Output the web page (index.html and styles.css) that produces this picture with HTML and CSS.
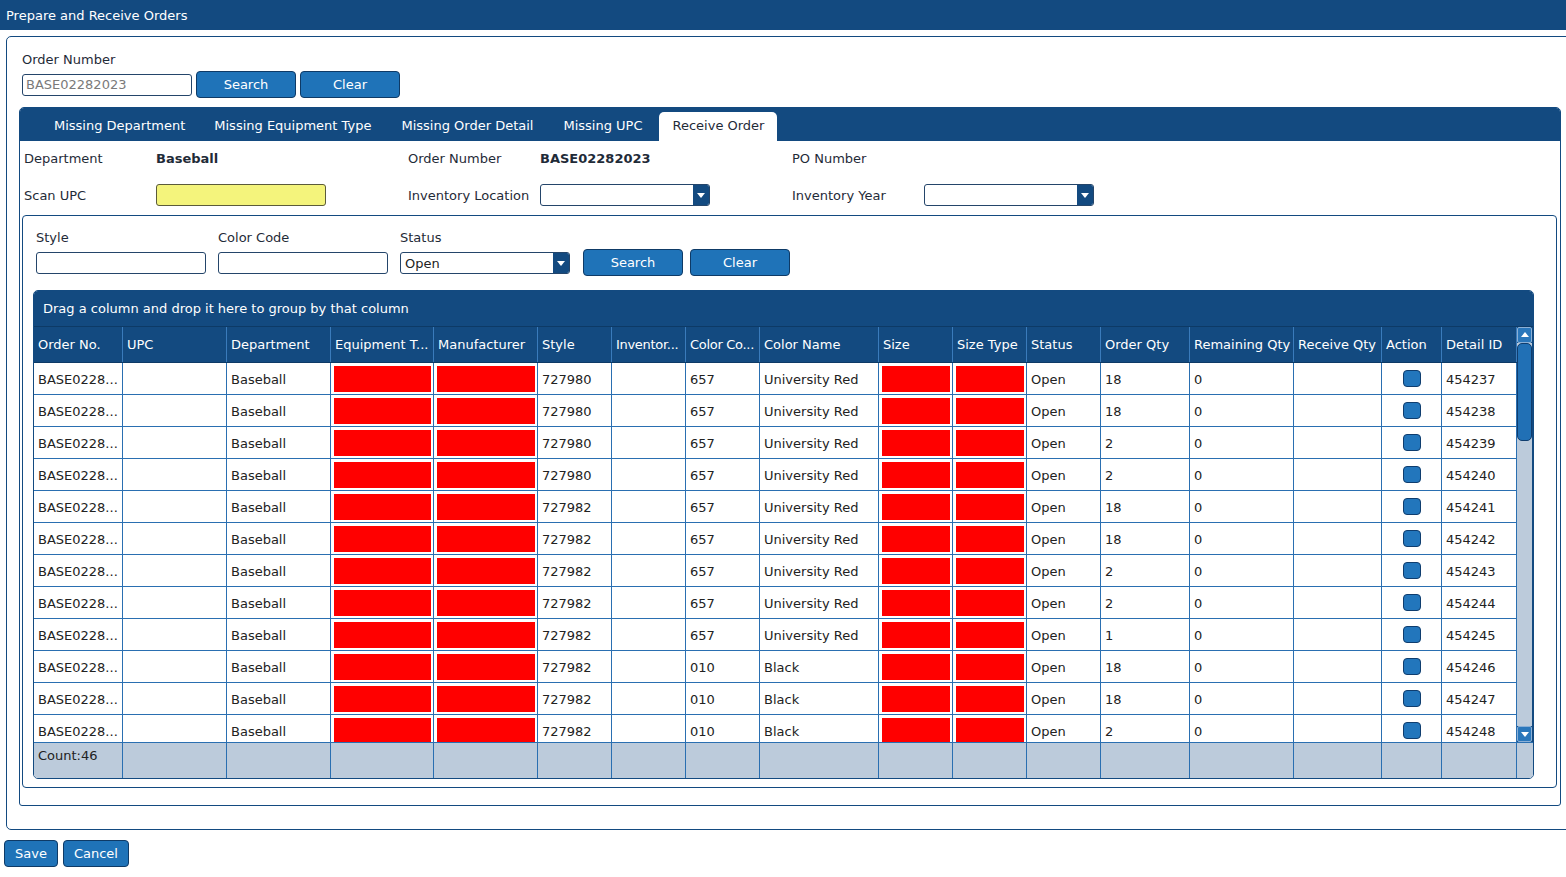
FILE: index.html
```html
<!DOCTYPE html>
<html lang="en">
<head>
<meta charset="utf-8">
<title>Prepare and Receive Orders</title>
<link rel="stylesheet" href="styles.css">
</head>
<body>
<div class="titlebar">Prepare and Receive Orders</div>

<div class="outer">
  <div class="order-form">
    <div class="lbl">Order Number</div>
    <div class="order-row">
      <input class="txt order-input" type="text" value="BASE02282023">
      <button class="btn">Search</button>
      <button class="btn">Clear</button>
    </div>
  </div>

  <div class="tabpanel">
    <div class="tabstrip">
      <div class="tab">Missing Department</div>
      <div class="tab">Missing Equipment Type</div>
      <div class="tab">Missing Order Detail</div>
      <div class="tab">Missing UPC</div>
      <div class="tab active">Receive Order</div>
    </div>

    <div class="info">
      <div class="ilbl">Department</div>
      <div class="ival">Baseball</div>
      <div class="ilbl">Order Number</div>
      <div class="ival">BASE02282023</div>
      <div class="ilbl">PO Number</div>
      <div class="ival"></div>

      <div class="ilbl">Scan UPC</div>
      <div><input class="txt upc" type="text"></div>
      <div class="ilbl">Inventory Location</div>
      <div><div class="select"><span class="sel-text"></span><span class="sel-arrow"></span></div></div>
      <div class="ilbl">Inventory Year</div>
      <div><div class="select"><span class="sel-text"></span><span class="sel-arrow"></span></div></div>
    </div>

    <div class="inner">
      <div class="filters">
        <div class="field">
          <div class="lbl">Style</div>
          <input class="txt f-input" type="text">
        </div>
        <div class="field">
          <div class="lbl">Color Code</div>
          <input class="txt f-input" type="text">
        </div>
        <div class="field">
          <div class="lbl">Status</div>
          <div class="select"><span class="sel-text">Open</span><span class="sel-arrow"></span></div>
        </div>
        <button class="btn f-search">Search</button>
        <button class="btn f-clear">Clear</button>
      </div>

      <div class="grid">
        <div class="group-header">Drag a column and drop it here to group by that column</div>
        <div class="grid-main">
          <div class="grid-cols">
            <div class="row head">
              <div class="c">Order No.</div>
              <div class="c">UPC</div>
              <div class="c">Department</div>
              <div class="c">Equipment T...</div>
              <div class="c">Manufacturer</div>
              <div class="c">Style</div>
              <div class="c">Inventor...</div>
              <div class="c">Color Co...</div>
              <div class="c">Color Name</div>
              <div class="c">Size</div>
              <div class="c">Size Type</div>
              <div class="c">Status</div>
              <div class="c">Order Qty</div>
              <div class="c">Remaining Qty</div>
              <div class="c">Receive Qty</div>
              <div class="c">Action</div>
              <div class="c">Detail ID</div>
            </div>
            <div class="body">
              <div class="row"><div class="c">BASE0228...</div><div class="c"></div><div class="c">Baseball</div><div class="c red"><i></i></div><div class="c red"><i></i></div><div class="c">727980</div><div class="c"></div><div class="c">657</div><div class="c">University Red</div><div class="c red"><i></i></div><div class="c red"><i></i></div><div class="c">Open</div><div class="c">18</div><div class="c">0</div><div class="c"></div><div class="c act"><span class="abtn"></span></div><div class="c">454237</div></div>
              <div class="row"><div class="c">BASE0228...</div><div class="c"></div><div class="c">Baseball</div><div class="c red"><i></i></div><div class="c red"><i></i></div><div class="c">727980</div><div class="c"></div><div class="c">657</div><div class="c">University Red</div><div class="c red"><i></i></div><div class="c red"><i></i></div><div class="c">Open</div><div class="c">18</div><div class="c">0</div><div class="c"></div><div class="c act"><span class="abtn"></span></div><div class="c">454238</div></div>
              <div class="row"><div class="c">BASE0228...</div><div class="c"></div><div class="c">Baseball</div><div class="c red"><i></i></div><div class="c red"><i></i></div><div class="c">727980</div><div class="c"></div><div class="c">657</div><div class="c">University Red</div><div class="c red"><i></i></div><div class="c red"><i></i></div><div class="c">Open</div><div class="c">2</div><div class="c">0</div><div class="c"></div><div class="c act"><span class="abtn"></span></div><div class="c">454239</div></div>
              <div class="row"><div class="c">BASE0228...</div><div class="c"></div><div class="c">Baseball</div><div class="c red"><i></i></div><div class="c red"><i></i></div><div class="c">727980</div><div class="c"></div><div class="c">657</div><div class="c">University Red</div><div class="c red"><i></i></div><div class="c red"><i></i></div><div class="c">Open</div><div class="c">2</div><div class="c">0</div><div class="c"></div><div class="c act"><span class="abtn"></span></div><div class="c">454240</div></div>
              <div class="row"><div class="c">BASE0228...</div><div class="c"></div><div class="c">Baseball</div><div class="c red"><i></i></div><div class="c red"><i></i></div><div class="c">727982</div><div class="c"></div><div class="c">657</div><div class="c">University Red</div><div class="c red"><i></i></div><div class="c red"><i></i></div><div class="c">Open</div><div class="c">18</div><div class="c">0</div><div class="c"></div><div class="c act"><span class="abtn"></span></div><div class="c">454241</div></div>
              <div class="row"><div class="c">BASE0228...</div><div class="c"></div><div class="c">Baseball</div><div class="c red"><i></i></div><div class="c red"><i></i></div><div class="c">727982</div><div class="c"></div><div class="c">657</div><div class="c">University Red</div><div class="c red"><i></i></div><div class="c red"><i></i></div><div class="c">Open</div><div class="c">18</div><div class="c">0</div><div class="c"></div><div class="c act"><span class="abtn"></span></div><div class="c">454242</div></div>
              <div class="row"><div class="c">BASE0228...</div><div class="c"></div><div class="c">Baseball</div><div class="c red"><i></i></div><div class="c red"><i></i></div><div class="c">727982</div><div class="c"></div><div class="c">657</div><div class="c">University Red</div><div class="c red"><i></i></div><div class="c red"><i></i></div><div class="c">Open</div><div class="c">2</div><div class="c">0</div><div class="c"></div><div class="c act"><span class="abtn"></span></div><div class="c">454243</div></div>
              <div class="row"><div class="c">BASE0228...</div><div class="c"></div><div class="c">Baseball</div><div class="c red"><i></i></div><div class="c red"><i></i></div><div class="c">727982</div><div class="c"></div><div class="c">657</div><div class="c">University Red</div><div class="c red"><i></i></div><div class="c red"><i></i></div><div class="c">Open</div><div class="c">2</div><div class="c">0</div><div class="c"></div><div class="c act"><span class="abtn"></span></div><div class="c">454244</div></div>
              <div class="row"><div class="c">BASE0228...</div><div class="c"></div><div class="c">Baseball</div><div class="c red"><i></i></div><div class="c red"><i></i></div><div class="c">727982</div><div class="c"></div><div class="c">657</div><div class="c">University Red</div><div class="c red"><i></i></div><div class="c red"><i></i></div><div class="c">Open</div><div class="c">1</div><div class="c">0</div><div class="c"></div><div class="c act"><span class="abtn"></span></div><div class="c">454245</div></div>
              <div class="row"><div class="c">BASE0228...</div><div class="c"></div><div class="c">Baseball</div><div class="c red"><i></i></div><div class="c red"><i></i></div><div class="c">727982</div><div class="c"></div><div class="c">010</div><div class="c">Black</div><div class="c red"><i></i></div><div class="c red"><i></i></div><div class="c">Open</div><div class="c">18</div><div class="c">0</div><div class="c"></div><div class="c act"><span class="abtn"></span></div><div class="c">454246</div></div>
              <div class="row"><div class="c">BASE0228...</div><div class="c"></div><div class="c">Baseball</div><div class="c red"><i></i></div><div class="c red"><i></i></div><div class="c">727982</div><div class="c"></div><div class="c">010</div><div class="c">Black</div><div class="c red"><i></i></div><div class="c red"><i></i></div><div class="c">Open</div><div class="c">18</div><div class="c">0</div><div class="c"></div><div class="c act"><span class="abtn"></span></div><div class="c">454247</div></div>
              <div class="row"><div class="c">BASE0228...</div><div class="c"></div><div class="c">Baseball</div><div class="c red"><i></i></div><div class="c red"><i></i></div><div class="c">727982</div><div class="c"></div><div class="c">010</div><div class="c">Black</div><div class="c red"><i></i></div><div class="c red"><i></i></div><div class="c">Open</div><div class="c">2</div><div class="c">0</div><div class="c"></div><div class="c act"><span class="abtn"></span></div><div class="c">454248</div></div>
            </div>
          </div>
          <div class="vscroll">
            <div class="sbtn up"></div>
            <div class="track"><div class="thumb"></div></div>
            <div class="sbtn down"></div>
          </div>
        </div>
        <div class="row foot">
          <div class="c">Count:46</div>
          <div class="c"></div><div class="c"></div><div class="c"></div><div class="c"></div><div class="c"></div><div class="c"></div><div class="c"></div><div class="c"></div><div class="c"></div><div class="c"></div><div class="c"></div><div class="c"></div><div class="c"></div><div class="c"></div><div class="c"></div><div class="c"></div><div class="c"></div>
        </div>
      </div>
    </div>
  </div>
</div>

<div class="actions">
  <button class="btn small">Save</button>
  <button class="btn small">Cancel</button>
</div>
</body>
</html>
```

FILE: styles.css
```css
html, body {
  margin: 0;
  padding: 0;
  overflow: hidden;
}
body {
  font-family: "DejaVu Sans", Verdana, sans-serif;
  font-size: 13px;
  color: #222;
  background: #fff;
  width: 1566px;
}
input, button {
  font-family: "DejaVu Sans", Verdana, sans-serif;
  font-size: 13px;
}

.titlebar {
  height: 30px;
  line-height: 31px;
  background: #134a80;
  color: #fff;
  padding-left: 6px;
}

.outer {
  margin: 6px 0 0 6px;
  width: 1600px;
  border: 1px solid #134a80;
  border-radius: 5px 0 0 5px;
  padding: 15px 0 23px 12px;
  box-sizing: border-box;
}

.lbl {
  line-height: 16px;
  color: #1f2b38;
}

.order-form {
  margin-left: 3px;
}
.order-row {
  display: flex;
  align-items: center;
  gap: 4px;
  margin-top: 3px;
  height: 27px;
}

.txt {
  box-sizing: border-box;
  height: 22px;
  border: 1px solid #24456a;
  border-radius: 3px;
  padding: 0 3px;
  background: #fff;
  outline: none;
}
.order-input {
  width: 170px;
  color: #7a7a7a;
}

.btn {
  box-sizing: border-box;
  height: 27px;
  width: 100px;
  background: #1f73b8;
  color: #fff;
  border: 1px solid #0e3a66;
  border-radius: 4px;
  padding: 0;
  cursor: pointer;
}

.tabpanel {
  margin-top: 9px;
  width: 1542px;
  box-sizing: border-box;
  border: 1px solid #134a80;
  border-radius: 5px 5px 3px 3px;
  padding-bottom: 17px;
}

.tabstrip {
  height: 33px;
  background: #134a80;
  display: flex;
  align-items: flex-end;
  padding-left: 19px;
  border-radius: 4px 4px 0 0;
}
.tab {
  height: 29px;
  line-height: 27px;
  padding: 0 15px;
  color: #fff;
  box-sizing: border-box;
}
.tab:first-child {
  padding-right: 14px;
}
.tab.active {
  background: #fff;
  color: #1f2b38;
  border-radius: 5px 5px 0 0;
  padding: 0 13px;
  margin-left: 2px;
}

.info {
  display: grid;
  grid-template-columns: 132px 252px 132px 252px 132px 252px;
  grid-template-rows: 34px 40px;
  align-items: center;
  padding-left: 4px;
}
.ilbl {
  color: #1f2b38;
}
.ival {
  font-weight: bold;
  color: #1f2b38;
}
.upc {
  width: 170px;
  background: #f4f47c;
  border-color: #5b5b3a;
  display: block;
}

.select {
  box-sizing: border-box;
  width: 170px;
  height: 22px;
  border: 1px solid #24456a;
  border-radius: 3px;
  display: flex;
  background: #fff;
  overflow: hidden;
}
.sel-text {
  flex: 1;
  line-height: 21px;
  padding-left: 4px;
}
.sel-arrow {
  width: 16px;
  background: #134a80;
  position: relative;
}
.sel-arrow::after {
  content: "";
  position: absolute;
  left: 4px;
  top: 8px;
  border-left: 4px solid transparent;
  border-right: 4px solid transparent;
  border-top: 5px solid #fff;
}

.inner {
  margin: 0 3px 0 2px;
  border: 1px solid #134a80;
  border-radius: 4px;
  padding: 14px 0 8px 10px;
}

.filters {
  display: flex;
  align-items: flex-end;
  margin-left: 3px;
  padding-bottom: 2px;
}
.field {
  width: 170px;
  margin-right: 12px;
  display: flex;
  flex-direction: column;
}
.field .lbl {
  margin-bottom: 6px;
}
.f-input {
  width: 170px;
}
.f-search {
  margin-left: 1px;
  margin-bottom: -2px;
}
.f-clear {
  margin-left: 7px;
  margin-bottom: -2px;
}

.grid {
  margin-top: 14px;
  width: 1501px;
  box-sizing: border-box;
  border: 1px solid #134a80;
  border-radius: 5px;
  overflow: hidden;
}
.group-header {
  height: 35px;
  line-height: 36px;
  background: #134a80;
  color: #fff;
  padding-left: 9px;
  border-bottom: 1px solid #0d3a66;
}
.grid-main {
  display: flex;
}
.grid-cols {
  width: 1483px;
}
.row {
  display: grid;
  grid-template-columns: 89px 104px 104px 103px 104px 74px 74px 74px 119px 74px 74px 74px 89px 104px 88px 60px 75px;
}
.c {
  box-sizing: border-box;
  border-right: 1px solid #2a6fb1;
  padding: 0 0 0 4px;
  white-space: nowrap;
  overflow: hidden;
}
.head {
  background: #134a80;
  color: #fff;
  height: 36px;
  border-bottom: 1px solid #0d3a66;
  box-sizing: border-box;
}
.head .c {
  line-height: 36px;
  border-right-color: #3a7bbb;
  padding-left: 4px;
}
.head .c:nth-child(7),
.head .c:nth-child(8) {
  letter-spacing: -0.3px;
}
.body {
  height: 379px;
  overflow: hidden;
}
.body .row {
  height: 32px;
}
.body .c {
  border-bottom: 1px solid #2a6fb1;
  line-height: 33px;
  color: #222;
}
.body .c.red {
  padding: 3px 2px 2px 3px;
}
.red i {
  display: block;
  height: 26px;
  background: #ff0000;
}
.body .c.act {
  display: flex;
  align-items: center;
  justify-content: center;
  padding: 0;
}
.abtn {
  display: block;
  width: 18px;
  height: 17px;
  box-sizing: border-box;
  background: #2276bc;
  border: 1px solid #0f3d6e;
  border-radius: 4px;
}

.vscroll {
  width: 16px;
  display: flex;
  flex-direction: column;
  background: #134a80;
}
.sbtn {
  height: 16px;
  box-sizing: border-box;
  background: #2a77bb;
  border: 1px solid #8bb0d6;
  border-radius: 2px;
  position: relative;
  margin: 0 1px 0 0;
}
.sbtn::after {
  content: "";
  position: absolute;
  left: 3px;
  border-left: 4px solid transparent;
  border-right: 4px solid transparent;
}
.sbtn.up::after {
  top: 4px;
  border-bottom: 5px solid #fff;
}
.sbtn.down::after {
  top: 5px;
  border-top: 5px solid #fff;
}
.track {
  flex: 1;
  background: #bccbdb;
  margin-right: 1px;
}
.thumb {
  height: 98px;
  box-sizing: border-box;
  background: #2170b5;
  border: 1px solid #0f3d6e;
  border-radius: 5px;
}

.foot {
  grid-template-columns: 89px 104px 104px 103px 104px 74px 74px 74px 119px 74px 74px 74px 89px 104px 88px 60px 75px 16px;
  background: #bccbdb;
  height: 35px;
  border-top: 1px solid #2a6fb1;
}
.foot .c {
  padding-top: 5px;
  line-height: 16px;
  color: #222;
}
.foot .c:last-child {
  border-right: none;
}

.actions {
  display: flex;
  gap: 5px;
  margin: 10px 0 0 4px;
}
.btn.small {
  width: auto;
  padding: 0 10px;
}
```
